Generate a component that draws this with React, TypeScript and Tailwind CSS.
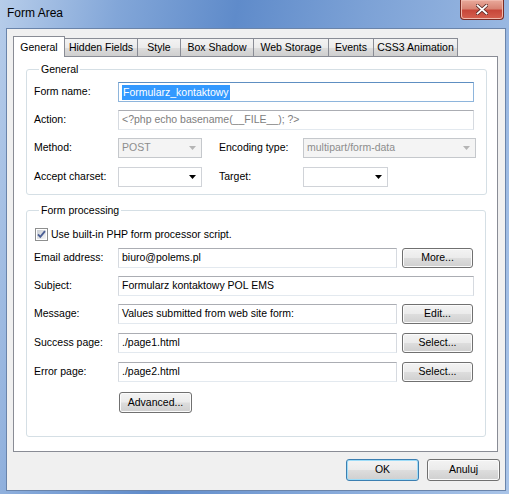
import React from "react";

const font = "font-['Liberation_Sans',Arial,sans-serif]";

const tabs = [
  { name: "General", w: "w-[52px]" },
  { name: "Hidden Fields", w: "w-[74px]" },
  { name: "Style", w: "w-[44px]" },
  { name: "Box Shadow", w: "w-[74px]" },
  { name: "Web Storage", w: "w-[76px]" },
  { name: "Events", w: "w-[46px]" },
  { name: "CSS3 Animation", w: "w-[85px]" },
];

function Label({ children, className = "" }: { children: React.ReactNode; className?: string }) {
  return (
    <span className={`flex h-[20px] items-center text-[10.5px] text-black ${className}`}>{children}</span>
  );
}

function TextBox({
  children,
  className = "",
  focused = false,
  muted = false,
}: {
  children?: React.ReactNode;
  className?: string;
  focused?: boolean;
  muted?: boolean;
}) {
  return (
    <div
      className={`flex h-[20px] items-center overflow-hidden whitespace-nowrap bg-white pl-[3px] text-[10.5px] border ${
        muted ? "text-[#7d7d7d]" : "text-black"
      } ${
        focused
          ? "border-[#8eb5dc] border-t-[#5e8fc2]"
          : "border-[#d6dae0] border-t-[#abadb3] border-b-[#e3e9ef]"
      } ${className}`}
    >
      {children}
    </div>
  );
}

function Arrow({ color }: { color: string }) {
  return (
    <svg width="7" height="4" viewBox="0 0 7 4">
      <path d="M0 0 H7 L3.5 4 Z" fill={color} />
    </svg>
  );
}

function Select({
  value,
  disabled = false,
  className = "",
}: {
  value?: string;
  disabled?: boolean;
  className?: string;
}) {
  return (
    <div
      className={`flex h-[20px] items-center justify-between border pl-[3px] pr-[5px] text-[10.5px] ${
        disabled
          ? "border-[#c5c8cc] bg-[#f4f4f4] text-[#8d8d8d]"
          : "border-[#d0d3d8] bg-white text-black"
      } ${className}`}
    >
      <span>{value}</span>
      <Arrow color={disabled ? "#b5b5b5" : "#000000"} />
    </div>
  );
}

function Button({
  children,
  className = "",
  primary = false,
}: {
  children: React.ReactNode;
  className?: string;
  primary?: boolean;
}) {
  return (
    <button
      className={`flex h-[20px] w-[71px] items-center justify-center rounded-[3px] border text-[10.5px] text-black bg-[linear-gradient(#f3f3f3_0%,#ebebeb_48%,#dddddd_52%,#cfcfcf_100%)] ${
        primary
          ? "border-[#3c7fb1] shadow-[inset_0_0_0_1px_#9ddcf8]"
          : "border-[#707070] shadow-[inset_0_0_0_1px_#fbfbfb]"
      } ${className}`}
    >
      {children}
    </button>
  );
}

function Checkbox() {
  return (
    <svg width="13" height="13" viewBox="0 0 13 13">
      <defs>
        <linearGradient id="cb" x1="0" y1="0" x2="1" y2="1">
          <stop offset="0" stopColor="#cbcfd5" />
          <stop offset="1" stopColor="#f6f6f6" />
        </linearGradient>
      </defs>
      <rect x="0.5" y="0.5" width="12" height="12" fill="#fff" stroke="#8e8f8f" />
      <rect x="2" y="2" width="9" height="9" fill="url(#cb)" />
      <path d="M3 6.3 L5.3 8.8 L10 3.2" fill="none" stroke="#4b5f95" strokeWidth="1.9" />
    </svg>
  );
}

function Row({ label, children, className = "" }: { label: string; children: React.ReactNode; className?: string }) {
  return (
    <div className={`flex h-[20px] items-center ${className}`}>
      <Label className="w-[84px]">{label}</Label>
      {children}
    </div>
  );
}

export default function App() {
  return (
    <div
      className={`flex h-[494px] w-[509px] flex-col overflow-hidden bg-[linear-gradient(100deg,#b7cdea_0%,#82a6d8_20%,#5f8bca_40%,#7da2d6_62%,#a9c4e8_100%)] ${font}`}
    >
      {/* title bar */}
      <div className="flex h-[28px] items-start">
        <span className="pl-[7px] pt-[6px] text-[12px] leading-[14px] text-black">Form Area</span>
        <div className="ml-auto mr-[5px] flex h-[20px] w-[44px] items-center justify-center rounded-b-[4px] border border-t-0 border-[#7a2c25] bg-[linear-gradient(#e9a99b_0%,#d88474_45%,#c7473a_55%,#d5604f_100%)] shadow-[inset_0_0_0_1px_#f0b9ad]">
          <svg width="12" height="11" viewBox="0 0 12 11">
            <path d="M1.5 1.5 L10.5 9.5 M10.5 1.5 L1.5 9.5" stroke="#5a2a26" strokeWidth="3.4" strokeLinecap="square" />
            <path d="M1.5 1.5 L10.5 9.5 M10.5 1.5 L1.5 9.5" stroke="#ffffff" strokeWidth="1.8" strokeLinecap="square" />
          </svg>
        </div>
      </div>

      {/* client area */}
      <div className="mb-[3px] ml-[6px] mr-[3px] flex flex-1 flex-col border border-[#6a84aa] bg-[#f0f0f0]">
        {/* tabs */}
        <div className="ml-[6px] mt-[7px] flex h-[20px] items-end">
          {tabs.map((t, i) =>
            i === 0 ? (
              <div
                key={t.name}
                className={`relative z-10 -mb-px flex h-[21px] ${t.w} items-start justify-center border border-b-0 border-[#898c95] bg-white pt-[3px] text-[10.5px] text-black`}
              >
                {t.name}
              </div>
            ) : (
              <div
                key={t.name}
                className={`-ml-px flex h-[18px] ${t.w} items-center justify-center border border-b-0 border-[#898c95] bg-[linear-gradient(#f3f3f3_0%,#ebebeb_50%,#dddddd_50%,#cfcfcf_100%)] text-[10.5px] text-black`}
              >
                {t.name}
              </div>
            )
          )}
        </div>

        {/* tab panel */}
        <div className="ml-[6px] h-[396px] w-[485px] border border-[#898c95] bg-white px-[12px]">
          <fieldset className="mt-[6px] w-[460px] rounded-[3px] border border-[#d5dfe5] pb-[7px] pl-[7px] pr-[10px] pt-[6px]">
            <legend className="ml-[5px] px-[2px] text-[10.5px] leading-[13px] text-black">General</legend>
            <Row label="Form name:">
              <TextBox focused className="w-[356px]">
                <span className="bg-[#3399ff] px-[1px] leading-[15px] text-white">Formularz_kontaktowy</span>
              </TextBox>
            </Row>
            <Row label="Action:" className="mt-[8px]">
              <TextBox muted className="w-[356px]">{"<?php echo basename(__FILE__); ?>"}</TextBox>
            </Row>
            <Row label="Method:" className="mt-[8px]">
              <Select value="POST" disabled className="w-[84px]" />
              <Label className="ml-[17px] w-[84px]">Encoding type:</Label>
              <Select value="multipart/form-data" disabled className="w-[173px]" />
            </Row>
            <Row label="Accept charset:" className="mt-[9px]">
              <Select className="w-[84px]" />
              <Label className="ml-[17px] w-[84px]">Target:</Label>
              <Select className="w-[85px]" />
            </Row>
          </fieldset>

          <fieldset className="mt-[9px] w-[460px] rounded-[3px] border border-[#d5dfe5] pb-[23px] pl-[7px] pr-[10px] pt-[11px]">
            <legend className="ml-[5px] px-[2px] text-[10.5px] leading-[13px] text-black">Form processing</legend>
            <div className="flex h-[13px] items-center gap-[3px] pl-[1px]">
              <Checkbox />
              <span className="text-[10.5px] text-black">Use built-in PHP form processor script.</span>
            </div>
            <Row label="Email address:" className="mt-[7px]">
              <TextBox className="w-[279px]">biuro@polems.pl</TextBox>
              <Button className="ml-[5px]">More...</Button>
            </Row>
            <Row label="Subject:" className="mt-[8px]">
              <TextBox className="w-[356px]">Formularz kontaktowy POL EMS</TextBox>
            </Row>
            <Row label="Message:" className="mt-[8px]">
              <TextBox className="w-[279px]">Values submitted from web site form:</TextBox>
              <Button className="ml-[5px]">Edit...</Button>
            </Row>
            <Row label="Success page:" className="mt-[9px]">
              <TextBox className="w-[279px]">./page1.html</TextBox>
              <Button className="ml-[5px]">Select...</Button>
            </Row>
            <Row label="Error page:" className="mt-[9px]">
              <TextBox className="w-[279px]">./page2.html</TextBox>
              <Button className="ml-[5px]">Select...</Button>
            </Row>
            <div className="mt-[10px] flex pl-[85px]">
              <Button className="h-[21px] w-[73px]">Advanced...</Button>
            </div>
          </fieldset>
        </div>

        {/* footer */}
        <div className="mr-[5px] mt-[7px] flex justify-end gap-[8px]">
          <Button primary className="h-[22px] w-[73px]">OK</Button>
          <Button className="h-[22px] w-[73px]">Anuluj</Button>
        </div>
      </div>
    </div>
  );
}
